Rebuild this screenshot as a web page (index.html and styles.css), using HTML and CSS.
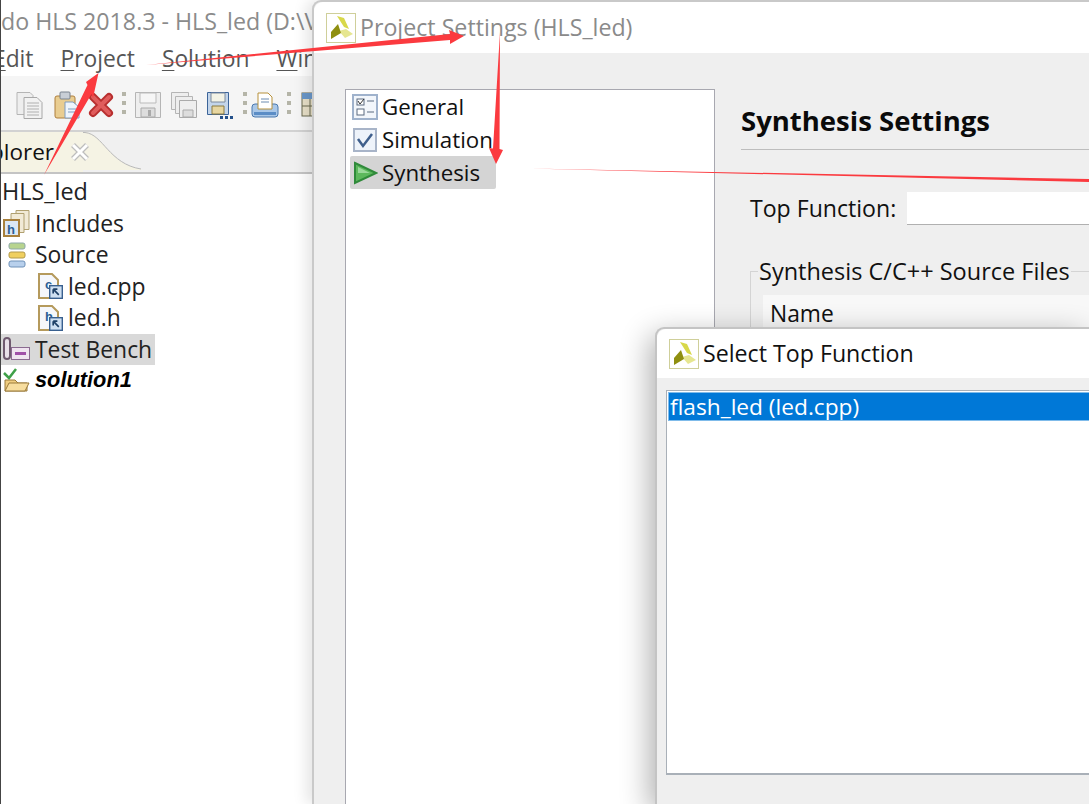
FILE: index.html
```html
<!DOCTYPE html>
<html lang="en">
<head>
<meta charset="utf-8">
<title>Project Settings</title>
<link rel="stylesheet" href="styles.css">
</head>
<body>
<svg width="0" height="0" class="defs" aria-hidden="true">
  <defs>
    <symbol id="logo" viewBox="0 0 30 30">
      <rect x="0.5" y="0.5" width="29" height="29" fill="#fff" stroke="#cfcf9a"/>
      <path d="M11 3 L18 5 L23 16 L18 14 Z" fill="#d8d84a"/>
      <path d="M13 18 L20 16 L27 21 L19 25 Z" fill="#e6e690"/>
      <path d="M12 11 L15 20 L5 26 L5 19 Z" fill="#8f8f10"/>
    </symbol>
    <symbol id="overlay" viewBox="6 6 10 10">
      <rect x="6.500" y="6.500" width="9" height="9" fill="#cfe0f2" stroke="#39608f"/>
      <path d="M9 9 L13 13 M9 9 H12 M9 9 V12" stroke="#1d3f66" stroke-width="1.200" fill="none"/>
    </symbol>
  </defs>
</svg>

<main class="stage">
  <section class="ide">
    <div class="ide-title">do HLS 2018.3 - HLS_led (D:\V</div>
    <nav class="menubar">
      <span class="menu menu-edit"><u>E</u>dit</span>
      <span class="menu"><u>P</u>roject</span>
      <span class="menu"><u>S</u>olution</span>
      <span class="menu"><u>W</u>in</span>
    </nav>
    <div class="toolbar">
      <svg class="tool" width="31" height="28" viewBox="0 0 31 28"><path d="M2 1.500h13l3 3v19H2z" fill="#eee" stroke="#b5b5b5"/><path d="M9 6.500h13l5 5v16H9z" fill="#f2f2f2" stroke="#a8a8a8"/><path d="M12 12h12M12 15h12M12 18h12M12 21h12M12 24h12" stroke="#b0b0b0"/></svg>
      <svg class="tool" width="26" height="28" viewBox="0 0 26 28"><rect x="1" y="5" width="20" height="22" rx="2" fill="#e9cd91" stroke="#ae7f3c"/><rect x="6" y="1" width="10" height="7" rx="1" fill="#c8ced6" stroke="#78828e"/><path d="M11 11h8l6 5v11H11z" fill="#eef5fc" stroke="#7f9cc0"/><path d="M14 18h8M14 21h8" stroke="#7f9cc0"/></svg>
      <svg class="tool" width="26" height="28" viewBox="0 0 26 28"><path d="M5 6 L21 22 M21 6 L5 22" stroke="#b82f2f" stroke-width="8" stroke-linecap="round"/><path d="M5 6 L21 22 M21 6 L5 22" stroke="#e05c5c" stroke-width="4" stroke-linecap="round"/></svg>
      <span class="grip"></span>
      <svg class="tool" width="28" height="28" viewBox="0 0 28 28"><path d="M1.500 1.500h25v25h-25z" fill="#eee" stroke="#b5b5b5"/><path d="M6 2h16v10H6z" fill="#f6f6f6" stroke="#bbb"/><path d="M7 17h14v9H7z" fill="#ddd" stroke="#aaa"/><rect x="14" y="19" width="3" height="6" fill="#aaa"/></svg>
      <svg class="tool" width="28" height="28" viewBox="0 0 28 28"><path d="M1.500 1.500h17v17h-17z" fill="#eee" stroke="#b5b5b5"/><path d="M5.500 5.500h17v17h-17z" fill="#eee" stroke="#b5b5b5"/><path d="M9.500 9.500h17v17h-17z" fill="#eee" stroke="#aaa"/><path d="M13 19h10v7H13z" fill="#ddd" stroke="#aaa"/></svg>
      <svg class="tool" width="29" height="28" viewBox="0 0 29 28"><path d="M1.500 1.500h21v22h-21z" fill="#c3d5ea" stroke="#3c6499"/><path d="M5 2h14v9H5z" fill="#f3f3e6" stroke="#7c8a9c"/><path d="M6 15h12v8H6z" fill="#e7d6a0" stroke="#8a7a40"/><path d="M14 25h3v3h-3zM19 25h3v3h-3zM24 25h3v3h-3z" fill="#24508a"/></svg>
      <span class="grip"></span>
      <svg class="tool tool-tight" width="28" height="28" viewBox="0 0 28 28"><rect x="1" y="13" width="26" height="13" rx="3" fill="#a9c7e8" stroke="#4a78ad"/><path d="M7 2h10l4 4v12H7z" fill="#fff" stroke="#b7913c"/><path d="M10 8h8M10 11h8" stroke="#6d8cb2"/><rect x="3" y="21" width="22" height="3" fill="#5b8dc6"/></svg>
      <span class="grip"></span>
      <svg class="tool tool-table" width="14" height="28" viewBox="0 0 14 28"><rect x="1" y="2" width="20" height="23" fill="#e8e0c8" stroke="#6a6a50"/><rect x="1" y="2" width="20" height="6" fill="#6a97c9"/><path d="M1 15h20M9 8v17" stroke="#6a6a50"/></svg>
    </div>
    <div class="tabstrip">
      <div class="tab">
        <span class="tab-label">plorer</span>
        <svg class="tab-close" width="20" height="20" viewBox="0 0 20 20"><path d="M3 3 L17 17 M17 3 L3 17" stroke="#bdbdbd" stroke-width="5.500"/><path d="M3 3 L17 17 M17 3 L3 17" stroke="#fff" stroke-width="3"/></svg>
      </div>
      <svg class="tab-curve" width="58" height="42" viewBox="0 0 58 42"><path d="M0 0 H2 C20 2 26 32 58 37 V38 H0 Z" fill="#f5f3e4"/><path d="M0 0.500 H2 C20 2 26 32 58 37" fill="none" stroke="#b9b9b9"/></svg>
    </div>
    <ul class="tree">
      <li class="row lvl0">HLS_led</li>
      <li class="row"><svg class="ico" width="28" height="28" viewBox="0 0 28 28"><path d="M14 1.500h13v19H14z" fill="#f1ead6" stroke="#b0a070"/><path d="M9 4.500h13v19H9z" fill="#f1ead6" stroke="#b0a070"/><rect x="2" y="11" width="15" height="16" fill="#dbe7f4" stroke="#a8803c" stroke-width="2"/><text class="ico-letter" x="5" y="25">h</text></svg>Includes</li>
      <li class="row"><svg class="ico" width="28" height="28" viewBox="0 0 28 28"><rect x="7" y="2" width="16" height="6" rx="2" fill="#b7d48e" stroke="#8ea9a8"/><rect x="7" y="11" width="16" height="6" rx="2" fill="#f0cf5e" stroke="#b39a4a"/><rect x="7" y="20" width="16" height="6" rx="2" fill="#b8d0ec" stroke="#6f91b8"/></svg>Source</li>
      <li class="row child"><svg class="ico" width="28" height="28" viewBox="0 0 28 28"><path d="M2 2h13l6 6v18H2z" fill="#f5f7fb" stroke="#b59a5c" stroke-width="2"/><text class="ico-letter" x="8" y="17">c</text><use href="#overlay" x="12" y="13" width="14" height="14"/></svg>led.cpp</li>
      <li class="row child"><svg class="ico" width="28" height="28" viewBox="0 0 28 28"><path d="M2 2h13l6 6v18H2z" fill="#f5f7fb" stroke="#b59a5c" stroke-width="2"/><text class="ico-letter" x="8" y="17">h</text><use href="#overlay" x="12" y="13" width="14" height="14"/></svg>led.h</li>
      <li class="row selected"><svg class="ico" width="28" height="28" viewBox="0 0 28 28"><rect x="2" y="3" width="6" height="21" rx="3" fill="#e8e0e8" stroke="#6f5a6f" stroke-width="2"/><rect x="9.500" y="12.500" width="18" height="12" fill="#efe4f0" stroke="#8a6a90"/><path d="M13 18.500h11" stroke="#a050a8" stroke-width="3"/></svg>Test Bench</li>
      <li class="row solution"><svg class="ico" width="28" height="28" viewBox="0 0 28 28"><path d="M3 14h10l3 3h9v8H3z" fill="#f0cd80" stroke="#9a7a3a"/><path d="M3 25l4-8h20l-4 8z" fill="#f7dd9e" stroke="#9a7a3a"/><path d="M2 7l5 5 7-9" fill="none" stroke="#3fa048" stroke-width="2.500"/></svg><b>solution1</b></li>
    </ul>
  </section>

  <section class="window settings">
    <header class="win-title">
      <svg class="logo" width="30" height="30"><use href="#logo"/></svg>
      <span class="title-text muted">Project Settings (HLS_led)</span>
    </header>
    <div class="settings-body">
      <ul class="nav">
        <li class="nav-row"><svg class="ico" width="26" height="26" viewBox="0 0 26 26"><rect x="1" y="1" width="24" height="24" fill="#f2f6fb" stroke="#9fb2cc" stroke-width="2"/><rect x="5" y="5" width="7" height="6" fill="#fff" stroke="#5a6a80"/><path d="M6 7l2 3 4-5" stroke="#333" fill="none"/><rect x="5" y="15" width="7" height="6" fill="#fff" stroke="#5a6a80"/><path d="M15 7h7M15 18h7" stroke="#5a6a80"/></svg>General</li>
        <li class="nav-row"><svg class="ico" width="26" height="26" viewBox="0 0 26 26"><rect x="2" y="2" width="22" height="22" fill="#eef3fa" stroke="#a8b4c8" stroke-width="2"/><path d="M6 12l5 7 9-12" fill="none" stroke="#3f5f8c" stroke-width="2.500"/></svg>Simulation</li>
        <li class="nav-row active"><svg class="ico" width="26" height="26" viewBox="0 0 26 26"><path d="M3 3 L24 13 L3 23 Z" fill="#5cb85c" stroke="#2f8a3a" stroke-width="2"/><path d="M6 7 L18 13 L6 13 Z" fill="#9ad89a"/></svg>Synthesis</li>
      </ul>
      <div class="pane">
        <h1 class="pane-title">Synthesis Settings</h1>
        <div class="field">
          <label class="field-label">Top Function:</label>
          <div class="field-input"></div>
        </div>
        <fieldset class="group">
          <legend class="group-legend">Synthesis C/C++ Source Files</legend>
          <div class="table-head">Name</div>
        </fieldset>
      </div>
    </div>
  </section>

  <section class="window select">
    <header class="win-title small">
      <svg class="logo" width="30" height="30"><use href="#logo"/></svg>
      <span class="title-text">Select Top Function</span>
    </header>
    <div class="select-body">
      <div class="list">
        <div class="list-row">flash_led (led.cpp)</div>
      </div>
    </div>
  </section>

  <svg class="arrows" width="1089" height="804" viewBox="0 0 1089 804" aria-hidden="true">
    <path d="M44 175 L87.500 85 L86 82 L98.500 73 L93 98 L91.500 94 Z" fill="#fb3a3f"/>
    <path d="M146 65 L450 34 L449 30 L464 36 L450 44 L450 40 Z" fill="#fb3a3f"/>
    <path d="M500 32 L499.500 149 L503 150 L496 164 L489 148 L493 148.500 Z" fill="#fb3a3f"/>
    <path d="M529 168.500 L1089 179 L1089 182 Z" fill="#fb3a3f"/>
  </svg>
</main>
</body>
</html>
```

FILE: styles.css
```css
* { box-sizing: border-box; }
html, body { margin: 0; padding: 0; }
body { background: #fff; font-family: "Open Sans", "Noto Sans", sans-serif; color: #111; overflow: hidden; }
ul { list-style: none; margin: 0; padding: 0; }
.defs { position: absolute; }

.stage { position: relative; width: 1089px; height: 804px; overflow: hidden; background: #fff; }

/* IDE window in the background */
.ide { width: 312px; height: 804px; border-left: 1px solid #444; overflow: hidden; font-size: 23px; }
.ide-title { height: 42px; padding: 5px 0 0 0; font-size: 23.200px; color: #8b8b8b; white-space: nowrap; line-height: 32px; }
.menubar { height: 34px; display: flex; gap: 27px; font-size: 22.800px; color: #555; line-height: 34px; white-space: nowrap; }
.menu u { text-underline-offset: 3px; text-decoration-thickness: 1px; }
.menu-edit { margin-left: -8px; }
.toolbar { height: 54px; background: #f5f5f5; display: flex; align-items: center; gap: 8px; padding: 4px 0 0 14px; overflow: hidden; }
.tool { flex: none; }
.tool-tight { margin-left: -4px; }
.tool-table { margin-left: 2px; }
.grip { flex: none; width: 4px; height: 26px; background: repeating-linear-gradient(#b5b5a8 0 4px, transparent 4px 9px); }
.tabstrip { height: 44px; display: flex; background: #f0f0f0; border-top: 2px solid #d2d2d2; border-bottom: 2px solid #c4c4c4; }
.tab { width: 87px; flex: none; background: #f5f3e4; display: flex; align-items: center; gap: 12px; margin-left: -5px; }
.tab-label { font-size: 22.500px; line-height: 38px; white-space: nowrap; margin-left: -6px; }
.tab-close { flex: none; z-index: 1; margin-left: 4px; }
.tab-curve { flex: none; }
.tree { background: #fff; padding-top: 2px; }
.row { height: 31.500px; line-height: 31px; display: flex; align-items: center; white-space: nowrap; color: #222; font-size: 22.900px; padding-left: 1px; }
.row .ico { margin-right: 5px; }
.lvl0 { padding-left: 1px; font-size: 23.400px; }
.child { padding-left: 36px; }
.child .ico { margin-right: 3px; }
.selected { background: #d9d9d9; width: 154px; }
.solution { height: 29px; }
.solution b { font-family: "Liberation Sans", sans-serif; font-style: italic; font-size: 21.800px; color: #000; }
.ico { flex: none; }
.ico-letter { font: bold 13px "Liberation Sans", sans-serif; fill: #2d5f94; }

/* Floating dialogs */
.window { position: absolute; background: #efefef; border-radius: 9px 0 0 0; }
.settings { left: 312px; top: 0; width: 777px; height: 804px; border: 2px solid #c9c9c9; border-right: 0; border-bottom: 0; box-shadow: -6px 0 14px rgba(0,0,0,.1); }
.select { left: 655px; top: 327px; width: 434px; height: 477px; border: 2px solid #c4c4c4; border-right: 0; border-bottom: 0; box-shadow: -5px 8px 30px rgba(0,0,0,.32); }
.win-title { height: 51px; background: #fff; display: flex; align-items: center; padding-left: 12px; gap: 4px; border-radius: 9px 0 0 0; }
.win-title.small { height: 49px; padding-left: 12px; gap: 4px; }
.logo { flex: none; }
.title-text { font-size: 23.200px; line-height: 30px; margin-top: -2px; white-space: nowrap; color: #111; }
.title-text.muted { color: #8a8a8a; }

.settings-body { display: flex; height: 751px; padding: 36px 0 0 31px; }
.nav { width: 370px; flex: none; background: #fff; border: 1px solid #a8a8b0; border-bottom: 0; padding: 0 0 0 4px; }
.nav-row { width: 146px; height: 33px; display: flex; align-items: center; font-size: 22.300px; color: #111; gap: 4px; padding-left: 2px; white-space: nowrap; }
.nav-row.active { background: #d4d4d4; border-radius: 2px; }
.pane { flex: 1; padding: 12px 0 0 26px; overflow: hidden; min-width: 0; }
.pane-title { margin: 0; height: 49px; font-size: 27.500px; font-weight: 700; line-height: 40px; color: #0a0a0a; border-bottom: 1px solid #bdbdbd; white-space: nowrap; }
.field { display: flex; align-items: center; margin-top: 42px; margin-left: 9px; gap: 11px; height: 33px; }
.field-label { font-size: 23.100px; white-space: nowrap; color: #111; line-height: 30px; margin-top: -2px; }
.field-input { flex: 1; height: 33px; background: #fff; border-bottom: 1px solid #b0b0b0; }
.group { margin: 31px 0 0 9px; padding: 9px 0 0 12px; border: 1px solid #d4d4d4; border-right: 0; border-bottom: 0; height: 200px; min-width: 0; }
.group-legend { font-size: 23.500px; padding: 0 1px; margin-left: -5px; color: #111; white-space: nowrap; line-height: 30px; }
.table-head { height: 33px; background: #f8f8f8; font-size: 22.800px; line-height: 38px; padding-left: 7px; color: #111; }

.select-body { height: 426px; padding: 12px 0 0 9px; }
.list { height: 385px; background: #fff; border: 1px solid #a9b0b8; border-right: 0; border-bottom-width: 2px; padding: 1px 0 0 1px; }
.list-row { height: 29px; background: #0078d7; color: #fff; font-size: 22.700px; line-height: 28px; padding-left: 1px; white-space: nowrap; border: 1px solid #7fbbea; border-right: 0; }

.arrows { position: absolute; left: 0; top: 0; pointer-events: none; }
```
